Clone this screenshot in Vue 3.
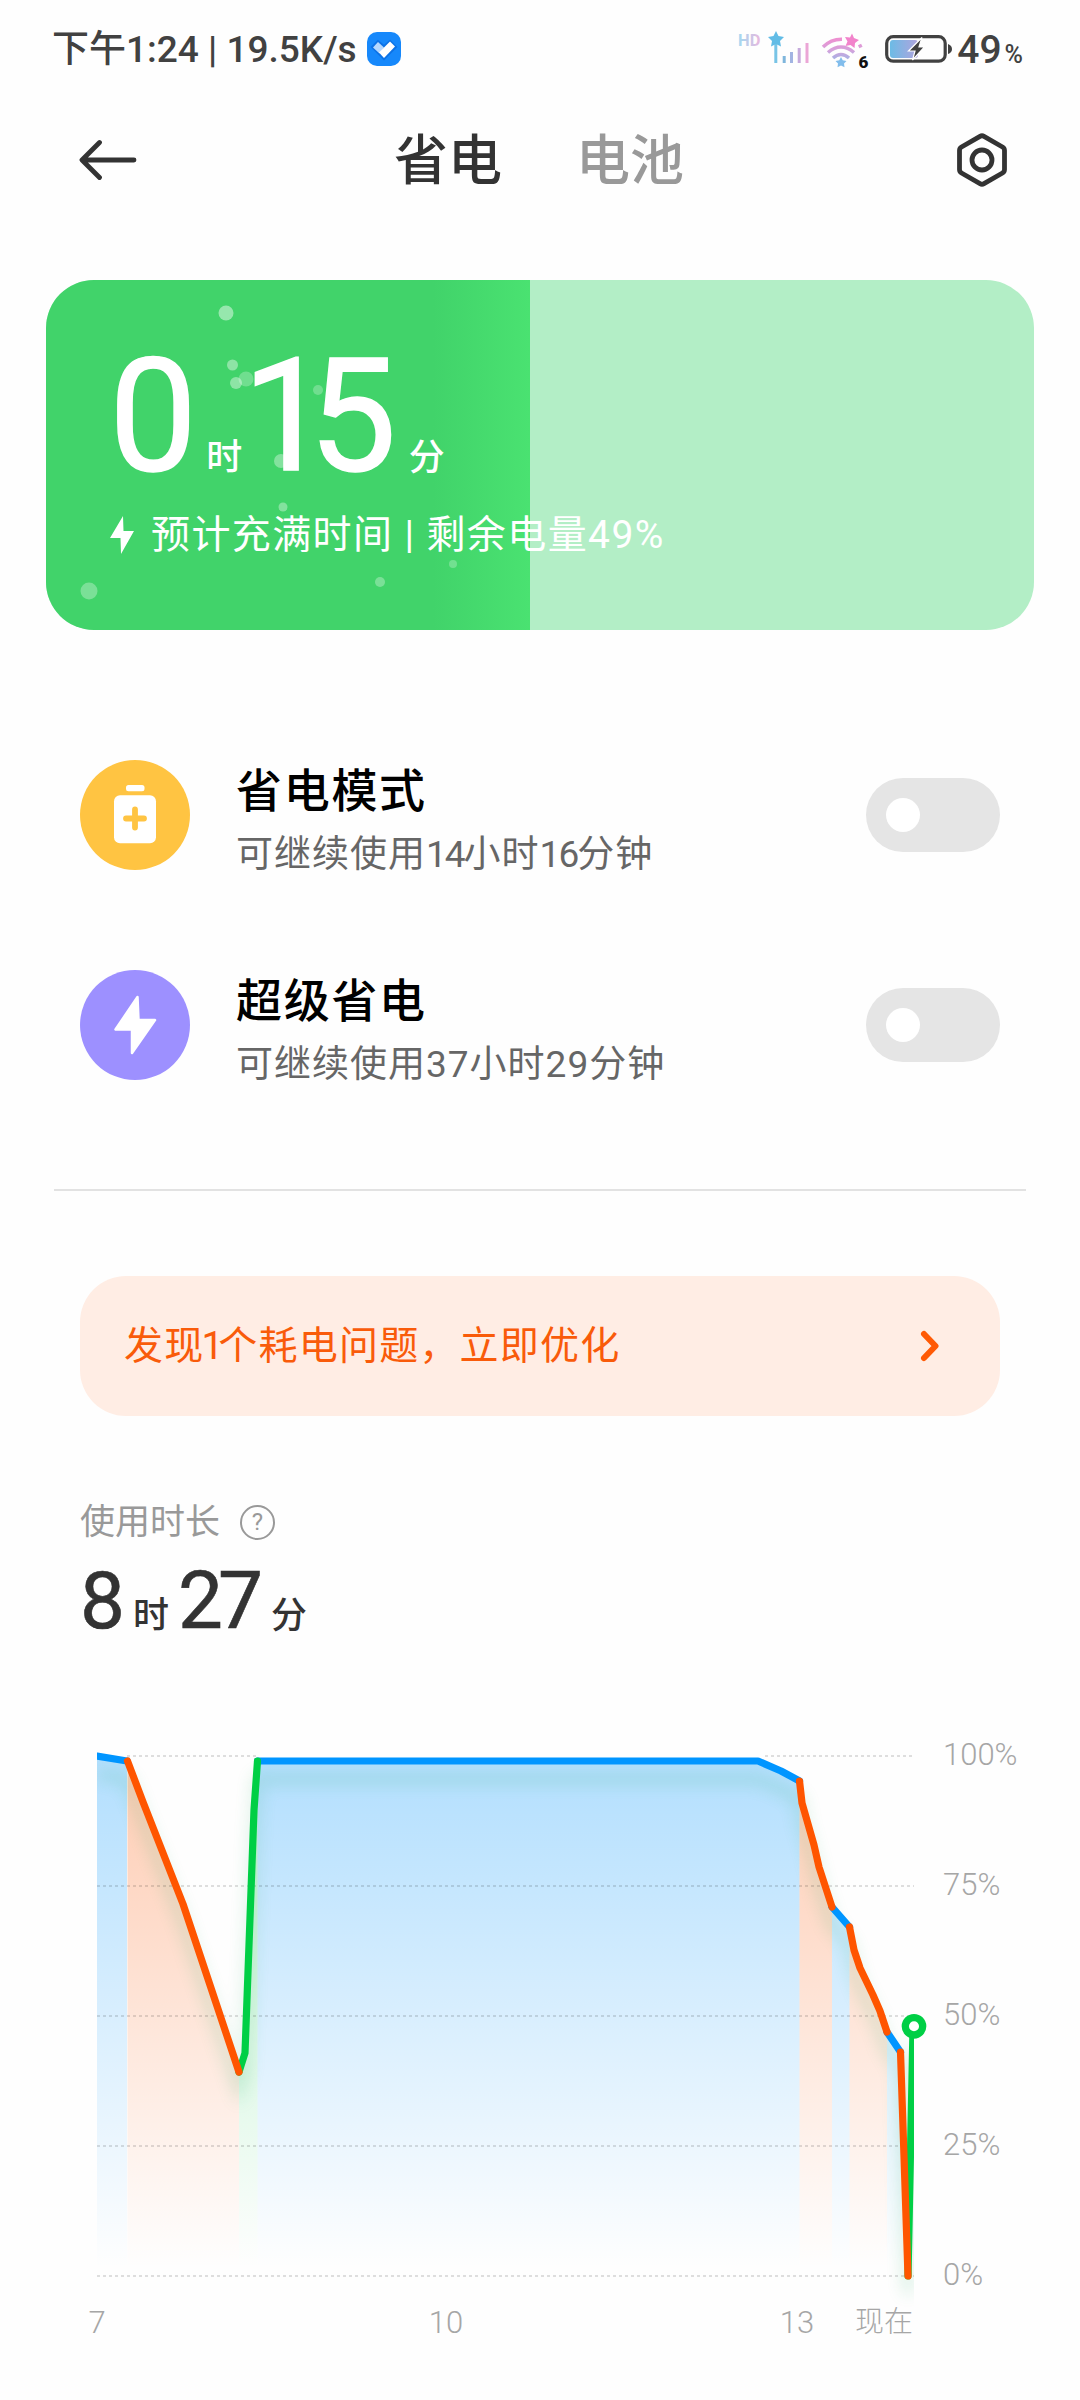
<script setup>
import { ref, computed } from "vue";

const modes = ref([
  { id: "saver", title: "省电模式", hours: "14", minutes: "16", enabled: false },
  { id: "ultra", title: "超级省电", hours: "37", minutes: "29", enabled: false },
]);

const level = ref(49);

const bubbles = [
  { x: 180, y: 33, r: 7.5, o: 0.45 },
  { x: 186.5, y: 85, r: 5.5, o: 0.4 },
  { x: 190, y: 103, r: 6, o: 0.4 },
  { x: 200, y: 99, r: 7.5, o: 0.25 },
  { x: 272, y: 110, r: 5, o: 0.25 },
  { x: 235, y: 181, r: 7, o: 0.35 },
  { x: 237, y: 227, r: 4.5, o: 0.35 },
  { x: 407, y: 284, r: 4, o: 0.25 },
  { x: 334, y: 302, r: 5, o: 0.3 },
  { x: 43, y: 311, r: 8.5, o: 0.3 },
];

const colors = { blue: "#0095ff", orange: "#ff5500", green: "#00cf45" };
const bottom = 556;

// the 100% line is interrupted where the curve runs along it
const gridLines = [
  { y: 36, label: "100%", path: "M127 36 H257 M765 36 H914" },
  { y: 166, label: "75%", path: "M97 166 H914" },
  { y: 296, label: "50%", path: "M97 296 H914" },
  { y: 426, label: "25%", path: "M97 426 H914" },
  { y: 556, label: "0%", path: "M97 556 H914" },
];

const segments = [
  { color: "blue", points: [[97, 36], [127, 41]] },
  { color: "orange", points: [[127.5, 41], [143, 82], [183, 184], [239, 352]] },
  { color: "green", points: [[239, 352], [245, 333], [254, 90], [257.5, 41]] },
  { color: "blue", points: [[257.5, 41], [758, 41], [781, 51], [799.5, 61]] },
  { color: "orange", points: [[799.5, 61], [802, 83], [814, 125], [819, 147], [832, 187]] },
  { color: "blue", points: [[832, 187], [849.5, 207]] },
  { color: "orange", points: [[849.5, 207], [854, 230], [860, 248], [873, 275], [880, 291], [887, 312]] },
  { color: "blue", points: [[887, 312], [900.5, 332]] },
  { color: "orange", points: [[900.5, 332], [908, 556]] },
  { color: "green", points: [[908, 556], [913, 308]] },
];

const toLine = (points) => points.map((p) => p.join(",")).join(" ");

const toArea = (points) => {
  const first = points[0][0];
  const last = points[points.length - 1][0];
  return `${first},${bottom} ${toLine(points)} ${last},${bottom}`;
};

const fullLine = computed(() => toLine(segments.flatMap((s) => s.points)));

// orange lines sit on top of green, green on top of blue
const order = ["blue", "green", "orange"];
const strokes = computed(() =>
  [...segments].sort((a, b) => order.indexOf(a.color) - order.indexOf(b.color))
);

const toggle = (mode) => {
  mode.enabled = !mode.enabled;
};
</script>

<template>
  <div class="page">
    <header class="status">
      <div class="status-left">
        <span class="status-text">下午1:24 | 19.5K/s</span>
        <svg class="shield" width="34" height="34" viewBox="0 0 34 34">
          <rect width="34" height="34" rx="10" fill="#1688fb" />
          <path d="M5 15 L11 9 L17 14 L23 9 L29 15 L17 27 Z" fill="#0c72e6" stroke="#0c72e6" stroke-width="2" />
          <path d="M6 15.5 L11 10 L17 15.5 L12.5 21.5 Z" fill="#b5d8ff" />
          <path d="M12 20.5 L23 9.5 L28 14.5 L17 26 Z" fill="#fff" />
        </svg>
      </div>
      <div class="status-right">
        <svg class="signals" width="136" height="44" viewBox="736 27 136 44">
          <defs>
            <linearGradient id="hd" gradientUnits="userSpaceOnUse" x1="738" y1="0" x2="762" y2="0">
              <stop offset="0" stop-color="#a4d8f0" />
              <stop offset="1" stop-color="#f2b4dc" />
            </linearGradient>
            <linearGradient id="wifi" gradientUnits="userSpaceOnUse" x1="0" y1="38" x2="0" y2="66">
              <stop offset="0" stop-color="#f08fd0" />
              <stop offset="0.45" stop-color="#d3a3dc" />
              <stop offset="1" stop-color="#83bdea" />
            </linearGradient>
          </defs>
          <text class="hd" x="737" y="45.5" fill="url(#hd)">HD</text>
          <rect x="773.3" y="42" width="3" height="21" fill="#78c4e6" />
          <path d="M775 31 L777.5 36 L783 37 L779 41 L780 46.5 L775 44 L770 46.5 L771 41 L767 37 L772.5 36 Z" fill="#62bce6" />
          <rect x="781.7" y="56" width="3" height="7" fill="#7fb6dc" />
          <rect x="789" y="52" width="3" height="11" fill="#a2b4e2" />
          <rect x="796.7" y="48" width="3" height="15" fill="#c6aadc" />
          <rect x="804.5" y="43" width="3" height="20" fill="#eba6d6" />
          <g fill="none" stroke="url(#wifi)" stroke-width="3.5">
            <path d="M822 47 Q830 39 841 39.2" />
            <path d="M858.5 44.5 L860 47.5" />
            <path d="M827 52.5 Q840 41.5 853 52.5" />
            <path d="M832 58 Q840 51 848 58" />
          </g>
          <path d="M851 33.5 L853 38 L858 40 L854 43 L853.5 48 L849.5 45 L844.5 46 L846.5 41.5 L844 37 L849 37.5 Z" fill="#f283cb" />
          <path d="M840 57 L841.7 60.2 L845.5 61 L843 63.5 L843.5 67.2 L840 65.5 L836.5 67.2 L837 63.5 L834.5 61 L838.3 60.2 Z" fill="#82bdec" />
          <text class="six" x="857.5" y="67.5">6</text>
        </svg>
        <svg class="battery" width="70" height="30" viewBox="0 0 70 30">
          <defs>
            <linearGradient id="charge" x1="0" y1="0" x2="1" y2="0">
              <stop offset="0" stop-color="#6cbbe5" />
              <stop offset="1" stop-color="#b0a4de" />
            </linearGradient>
          </defs>
          <rect x="1.7" y="2.7" width="58.5" height="24.5" rx="6.5" fill="none" stroke="#414141" stroke-width="3.2" />
          <rect x="5" y="6" width="28" height="18" rx="3" fill="url(#charge)" />
          <path d="M63 10 Q67 11.5 67 15 Q67 18.5 63 20 Z" fill="#414141" />
          <path d="M37 3.5 L23.5 17 H30 L27.5 26 L39.5 13 H34 Z" fill="#414141" stroke="#fff" stroke-width="1.2" />
        </svg>
        <span class="status-level">49</span><span class="status-pct">%</span>
      </div>
    </header>

    <nav class="nav">
      <svg class="back" width="60" height="44" viewBox="0 0 60 44" fill="none" stroke="#333" stroke-width="4.8" stroke-linecap="round" stroke-linejoin="round">
        <path d="M20.5 4.5 L3 22 L20.5 39.5 M3.5 22 H55" />
      </svg>
      <div class="tabs">
        <span class="tab active">省电</span>
        <span class="tab">电池</span>
      </div>
      <svg class="settings" width="54" height="58" viewBox="0 0 54 58" fill="none" stroke="#333" stroke-width="4.8" stroke-linejoin="round">
        <path d="M25 5.3 Q27 4.2 29 5.3 L47.5 16 Q49.5 17.2 49.5 19.5 V38.5 Q49.5 40.8 47.5 42 L29 52.7 Q27 53.8 25 52.7 L6.5 42 Q4.5 40.8 4.5 38.5 V19.5 Q4.5 17.2 6.5 16 Z" />
        <circle cx="27" cy="29" r="10" />
      </svg>
    </nav>

    <section class="card">
      <div class="charged" :style="{ width: level + '%' }"></div>
      <svg class="bubbles" width="988" height="350" viewBox="0 0 988 350">
        <circle v-for="(b, i) in bubbles" :key="i" :cx="b.x" :cy="b.y" :r="b.r" fill="#fff" :opacity="b.o" />
      </svg>
      <div class="time">
        <span class="big">0</span>
        <span class="unit">时</span>
        <span class="big minutes">15</span>
        <span class="unit">分</span>
      </div>
      <div class="hint">
        <svg width="26" height="40" viewBox="0 0 26 40">
          <path d="M14 1 L1 23 H11.5 L12 39 L25 16 H14.5 Z" fill="#fff" />
        </svg>
        <span>预计充满时间 | 剩余电量49%</span>
      </div>
    </section>

    <section class="modes">
      <div v-for="mode in modes" :key="mode.id" class="mode">
        <div class="mode-icon" :class="mode.id">
          <svg v-if="mode.id === 'saver'" width="110" height="110" viewBox="0 0 110 110">
            <rect x="46" y="25" width="18.5" height="6.2" rx="2.5" fill="#fff" />
            <rect x="34" y="35.3" width="42" height="48" rx="6" fill="#fff" />
            <path d="M55 49.5 V67.5 M46 58.5 H64" stroke="#ffc442" stroke-width="5.8" stroke-linecap="round" />
          </svg>
          <svg v-else width="110" height="110" viewBox="0 0 110 110">
            <path d="M57.5 27 L35.5 59.5 H52 V83 L75 50 H58.5 Z" fill="#fff" stroke="#fff" stroke-width="2.5" stroke-linejoin="round" />
          </svg>
        </div>
        <div class="mode-text">
          <div class="mode-title">{{ mode.title }}</div>
          <div class="mode-sub" :class="{ tight: mode.id === 'saver' }">可继续使用<span>{{ mode.hours }}</span>小时<span>{{ mode.minutes }}</span>分钟</div>
        </div>
        <button class="switch" :class="{ on: mode.enabled }" @click="toggle(mode)"></button>
      </div>
    </section>

    <hr class="divider" />

    <section class="alert">
      <span class="alert-text">发现<span class="one">1</span>个耗电问题，立即优化</span>
      <svg width="24" height="36" viewBox="0 0 24 36" fill="none" stroke="#ff5a05" stroke-width="6" stroke-linecap="round" stroke-linejoin="round">
        <path d="M6 6 L17.5 18 L6 30" />
      </svg>
    </section>

    <section class="usage">
      <div class="usage-label">
        <span class="usage-name">使用时长</span>
        <span class="help">?</span>
      </div>
      <div class="usage-time">
        <span class="num">8</span>
        <span class="usage-unit">时</span>
        <span class="num second">27</span>
        <span class="usage-unit">分</span>
      </div>
    </section>

    <svg class="chart" width="1080" height="680" viewBox="0 0 1080 680">
      <defs>
        <linearGradient v-for="(c, name) in colors" :id="'fill-' + name" :key="name" gradientUnits="userSpaceOnUse" x1="0" y1="36" x2="0" y2="548">
          <stop offset="0" :stop-color="c" stop-opacity="0.3" />
          <stop offset="1" :stop-color="c" stop-opacity="0" />
        </linearGradient>
        <clipPath id="plot">
          <rect x="97" y="0" width="817" height="620" />
        </clipPath>
        <filter id="soft" filterUnits="userSpaceOnUse" x="60" y="0" width="900" height="640">
          <feGaussianBlur stdDeviation="8" />
        </filter>
      </defs>
      <g clip-path="url(#plot)">
        <polygon v-for="(s, i) in segments" :key="i" :points="toArea(s.points)" :fill="`url(#fill-${s.color})`" />
        <polyline :points="fullLine" transform="translate(0 18)" fill="none" stroke="#1fa65c" stroke-width="10" opacity="0.17" filter="url(#soft)" />
      </g>
      <path v-for="g in gridLines" :key="g.y" :d="g.path" fill="none" stroke="#000" stroke-opacity="0.17" stroke-width="1.6" stroke-dasharray="3 3" />
      <g clip-path="url(#plot)" fill="none" stroke-width="7.2" stroke-linecap="round" stroke-linejoin="round">
        <polyline v-for="(s, i) in strokes" :key="i" :points="toLine(s.points)" :stroke="colors[s.color]" />
      </g>
      <circle cx="914" cy="306.3" r="8.7" fill="#fff" stroke="#00cf45" stroke-width="7.3" />
      <g class="axis">
        <text v-for="g in gridLines" :key="g.label" x="943" :y="g.y + 9">{{ g.label }}</text>
        <text x="97" y="613" text-anchor="middle">7</text>
        <text x="446" y="613" text-anchor="middle">10</text>
        <text x="797" y="613" text-anchor="middle">13</text>
        <text class="now" x="884" y="612" text-anchor="middle">现在</text>
      </g>
    </svg>
  </div>
</template>

<style>
body {
  margin: 0;
  background: #fefefe;
}
</style>

<style scoped>
.page {
  width: 1080px;
  height: 2400px;
  display: flex;
  flex-direction: column;
  overflow: hidden;
  background: #fefefe;
  color: #333;
  font-family: Roboto, "Noto Sans CJK SC", sans-serif;
}

/* Status bar */
.status {
  height: 98px;
  flex: none;
  display: flex;
  justify-content: space-between;
  padding: 0 58px 0 52px;
  box-sizing: border-box;
  color: #414141;
}

.status-left,
.status-right {
  display: flex;
  align-items: center;
}

.status-text {
  font-size: 37px;
  font-weight: 500;
  line-height: 50px;
  padding-top: 2px;
  white-space: pre;
}

.shield {
  margin-left: 10px;
}

.hd {
  font-size: 16.5px;
  font-weight: 700;
}

.six {
  font-size: 17px;
  font-weight: 900;
  fill: #111;
}

.battery {
  margin-left: 12px;
}

.status-level {
  font-size: 39px;
  font-weight: 500;
  line-height: 50px;
  margin-left: 2px;
  padding-top: 2px;
}

.status-pct {
  font-size: 25px;
  font-weight: 500;
  line-height: 30px;
  margin-top: 12px;
  margin-right: -1px;
  padding-left: 3px;
}

/* Navigation */
.nav {
  height: 124px;
  flex: none;
  display: flex;
  align-items: center;
  padding: 0 71px 0 79px;
}

.tabs {
  flex: 1;
  display: flex;
  gap: 74px;
  padding: 4px 0 0 255px;
}

.tab {
  font-size: 54px;
  font-weight: 500;
  line-height: 70px;
  color: #999;
}

.tab.active {
  color: #333;
}

/* Charging card */
.card {
  position: relative;
  flex: none;
  height: 350px;
  margin: 58px 46px 0;
  padding: 61px 0 0 63px;
  box-sizing: border-box;
  border-radius: 48px;
  background: #b3eec6;
  color: #fff;
  overflow: hidden;
}

.charged {
  position: absolute;
  top: 0;
  left: 0;
  height: 100%;
  background: linear-gradient(90deg, #41d36a 80%, #4ae271);
}

.bubbles {
  position: absolute;
  top: 0;
  left: 0;
}

.time {
  position: relative;
  display: flex;
  align-items: baseline;
  line-height: 150px;
}

.big {
  font-size: 157px;
  -webkit-text-stroke: 1.4px #fff;
}

.minutes {
  letter-spacing: -22px;
}

.unit {
  font-size: 36px;
  font-weight: 500;
  line-height: 1;
  margin-left: 9px;
}

.minutes + .unit {
  margin-left: 34px;
}

.hint {
  position: relative;
  display: flex;
  align-items: center;
  gap: 16px;
  margin-top: 18px;
  font-size: 39px;
  line-height: 52px;
  letter-spacing: 1.4px;
}

/* Modes */
.modes {
  flex: none;
  display: flex;
  flex-direction: column;
  gap: 100px;
  margin: 130px 80px 0;
}

.mode {
  display: flex;
  align-items: center;
  height: 110px;
}

.mode-icon {
  width: 110px;
  height: 110px;
  border-radius: 50%;
}

.saver {
  background: #ffc442;
}

.ultra {
  background: #9d90ff;
}

.mode-text {
  flex: 1;
  margin-left: 46px;
  padding-top: 10px;
}

.mode-title {
  font-size: 46px;
  font-weight: 500;
  line-height: 64px;
  letter-spacing: 1.7px;
  color: #000;
}

.mode-sub {
  font-size: 37px;
  line-height: 52px;
  margin-top: 6px;
  letter-spacing: 1px;
  color: #666;
}

.mode-sub.tight span {
  letter-spacing: -2px;
}

.switch {
  width: 134px;
  height: 74px;
  padding: 20px;
  border: none;
  border-radius: 37px;
  background: #e5e5e5;
  display: flex;
  cursor: pointer;
}

.switch::before {
  content: "";
  width: 34px;
  height: 34px;
  border-radius: 50%;
  background: #fff;
}

.switch.on {
  justify-content: flex-end;
  background: #0d84ff;
}

.divider {
  flex: none;
  width: 972px;
  height: 2px;
  margin: 109px auto 0;
  border: none;
  background: #e2e2e2;
}

/* Alert */
.alert {
  flex: none;
  display: flex;
  align-items: center;
  justify-content: space-between;
  height: 140px;
  margin: 85px 80px 0;
  padding: 0 58px 0 44px;
  box-sizing: border-box;
  border-radius: 46px;
  background: #ffede4;
  color: #f95b0a;
}

.alert-text {
  font-size: 39px;
  line-height: 52px;
  letter-spacing: 1.2px;
}

.one {
  letter-spacing: -5px;
  margin-left: -3px;
}

/* Usage */
.usage {
  flex: none;
  height: 224px;
  margin: 80px 80px 0;
}

.usage-label {
  display: flex;
  align-items: center;
  gap: 20px;
  height: 52px;
  font-size: 35px;
  color: #999;
}

.usage-name {
  line-height: 50px;
  padding-top: 2px;
}

.help {
  width: 35px;
  height: 35px;
  box-sizing: border-box;
  border: 2.5px solid #999;
  border-radius: 50%;
  font-size: 24px;
  line-height: 31px;
  text-align: center;
}

.usage-time {
  display: flex;
  align-items: baseline;
  line-height: 80px;
  margin-top: 13px;
}

.num {
  font-size: 80px;
  -webkit-text-stroke: 0.6px #333;
}

.usage-unit {
  font-size: 36px;
  font-weight: 500;
  line-height: 1;
  margin-left: 8px;
}

.num.second {
  margin-left: 9px;
  letter-spacing: -5px;
}

.second + .usage-unit {
  margin-left: 13px;
}

/* Chart */
.chart {
  flex: none;
  display: block;
}

.axis {
  font-size: 31px;
  font-weight: 300;
  fill: #a6a6a6;
}

.now {
  font-size: 29px;
}
</style>
